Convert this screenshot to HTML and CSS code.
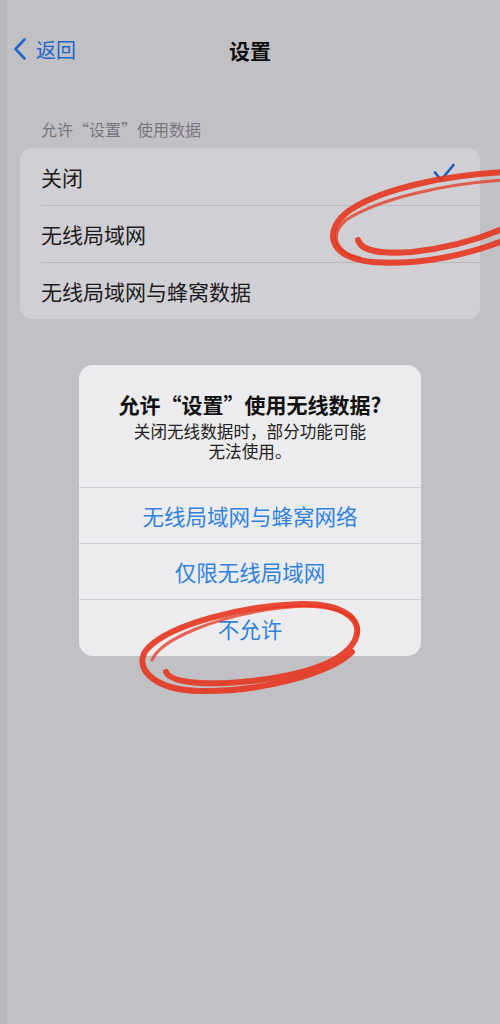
FILE: index.html
```html
<!DOCTYPE html>
<html lang="zh-CN">
<head>
<meta charset="utf-8">
<title>设置</title>
<link rel="stylesheet" href="styles.css">
</head>
<body>
<div class="screen">
  <header class="nav">
    <a class="back">
      <svg class="chev" width="16" height="24" viewBox="0 0 16 24"><path d="M12.5 2.5 L3.5 12 L12.5 21.5" fill="none" stroke="currentColor" stroke-width="2.6" stroke-linecap="round" stroke-linejoin="round"/></svg>
      <span>返回</span>
    </a>
    <h1 class="title">设置</h1>
    <span></span>
  </header>

  <p class="section-label">允许“设置”使用数据</p>
  <ul class="list">
    <li class="row"><span>关闭</span>
      <svg class="check" width="22" height="20" viewBox="0 0 22 20"><path d="M2 9.5 L8 17 L20.5 2" fill="none" stroke="currentColor" stroke-width="2.6" stroke-linecap="round" stroke-linejoin="round"/></svg>
    </li>
    <li class="row"><span>无线局域网</span></li>
    <li class="row"><span>无线局域网与蜂窝数据</span></li>
  </ul>

  <div class="alert">
    <div class="alert-body">
      <h2 class="alert-title">允许“设置”使用无线数据?</h2>
      <p class="alert-msg">关闭无线数据时，部分功能可能<br>无法使用。</p>
    </div>
    <button class="alert-btn">无线局域网与蜂窝网络</button>
    <button class="alert-btn">仅限无线局域网</button>
    <button class="alert-btn last">不允许</button>
  </div>

  <svg class="marks" width="500" height="1024" viewBox="0 0 500 1024">
    <g fill="none" stroke-linecap="round" stroke-linejoin="round">
      <path class="ink" d="M505 172 C450 175 385 187 350 210 C322 230 328 258 372 262 C420 266 470 254 505 240"/>
      <path class="ink thin" d="M505 180 C445 184 380 198 346 220 C330 234 334 252 360 258"/>
      <path class="ink" d="M358 240 C362 252 382 254 412 252 C452 248 482 238 505 228"/>
      <path class="ink" d="M166 672 C172 684 210 686 260 680 C310 673 345 660 355 640 C365 618 340 603 300 604 C240 606 170 625 148 648 C132 665 150 690 200 691 C260 692 330 674 352 652"/>
      <path class="ink thin" d="M152 660 C160 640 215 616 280 608 C330 602 362 614 358 634"/>
    </g>
  </svg>
</div>
</body>
</html>
```

FILE: styles.css
```css
* { box-sizing: border-box; margin: 0; padding: 0; }

html, body {
  width: 500px;
  height: 1024px;
  overflow: hidden;
}

body {
  background: linear-gradient(to right, #b9b8bd 0 7px, #c1c0c5 7px);
  font-family: "Noto Sans CJK SC", "Noto Sans", sans-serif;
  color: #1c1c1e;
}

.screen {
  position: relative;
  height: 1024px;
  padding-top: 30px;
}

/* navigation bar */
.nav {
  display: grid;
  grid-template-columns: 1fr auto 1fr;
  align-items: center;
  height: 40px;
  padding: 0 12px;
}

.back {
  display: flex;
  align-items: center;
  gap: 8px;
  color: #1f67c8;
  font-size: 20px;
  line-height: 24px;
}

.chev { display: block; margin-top: -2px; }

.title {
  font-size: 21px;
  font-weight: 700;
  line-height: 28px;
  color: #111;
}

/* grouped list */
.section-label {
  margin: 48px 0 8px 41px;
  font-size: 16px;
  line-height: 22px;
  color: #77767c;
}

.list {
  list-style: none;
  margin: 0 20px;
  background: #d0cfd3;
  border-radius: 12px;
  overflow: hidden;
}

.row {
  display: flex;
  align-items: center;
  justify-content: space-between;
  height: 57px;
  margin-left: 21px;
  padding-right: 25px;
  font-size: 21px;
  color: #1d1d20;
}

.row + .row { border-top: 1px solid #bab9be; }

.check { color: #1f5cb8; margin-top: -8px; }

/* alert sheet */
.alert {
  width: 342px;
  margin: 46px auto 0;
  background: #ececee;
  border-radius: 14px;
  overflow: hidden;
  display: flex;
  flex-direction: column;
}

.alert-body {
  padding: 25px 16px 26px;
  text-align: center;
}

.alert-title {
  font-size: 21px;
  font-weight: 700;
  line-height: 28px;
  color: #111;
}

.alert-msg {
  margin-top: 3px;
  font-size: 16.6px;
  line-height: 20px;
  color: #222;
}

.alert-btn {
  height: 56px;
  border: 0;
  border-top: 1px solid #cfcfd3;
  background: transparent;
  font-family: inherit;
  font-size: 21.5px;
  color: #2f82dc;
}

.alert-btn.last { height: 57px; }

/* red pen annotations */
.marks {
  position: absolute;
  left: 0;
  top: 0;
  pointer-events: none;
}

.ink {
  stroke: #e5361f;
  stroke-width: 6;
  opacity: 0.9;
}

.ink.thin {
  stroke-width: 3;
  opacity: 0.75;
}
```
